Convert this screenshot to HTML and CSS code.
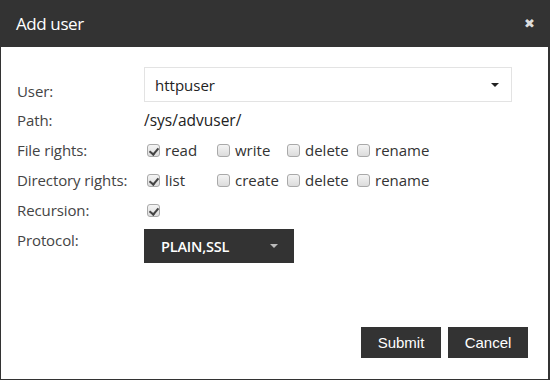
FILE: index.html
```html
<!DOCTYPE html>
<html>
<head>
<meta charset="utf-8">
<link rel="stylesheet" href="styles.css">
</head>
<body>
<div class="modal">
  <div class="header">
    <span class="title">Add user</span>
    <span class="close">&#x2716;</span>
  </div>
  <div class="body">
    <div class="form">
      <div class="row row-user">
        <div class="label">User:</div>
        <div class="select">
          <span>httpuser</span>
          <span class="caret"></span>
        </div>
      </div>
      <div class="row">
        <div class="label">Path:</div>
        <div class="path">/sys/advuser/</div>
      </div>
      <div class="row">
        <div class="label">File rights:</div>
        <div class="checks">
          <label class="opt"><span class="cb on"></span>read</label>
          <label class="opt"><span class="cb"></span>write</label>
          <label class="opt"><span class="cb"></span>delete</label>
          <label class="opt"><span class="cb"></span>rename</label>
        </div>
      </div>
      <div class="row">
        <div class="label">Directory rights:</div>
        <div class="checks">
          <label class="opt"><span class="cb on"></span>list</label>
          <label class="opt"><span class="cb"></span>create</label>
          <label class="opt"><span class="cb"></span>delete</label>
          <label class="opt"><span class="cb"></span>rename</label>
        </div>
      </div>
      <div class="row">
        <div class="label">Recursion:</div>
        <div class="checks">
          <label class="opt"><span class="cb on"></span></label>
        </div>
      </div>
      <div class="row row-proto">
        <div class="label">Protocol:</div>
        <div class="proto">
          <span>PLAIN,SSL</span>
          <span class="caret light"></span>
        </div>
      </div>
    </div>
    <div class="footer">
      <button class="btn">Submit</button>
      <button class="btn">Cancel</button>
    </div>
  </div>
</div>
</body>
</html>
```
FILE: styles.css
```css
* { box-sizing: border-box; }
html, body { margin: 0; padding: 0; background: #fff; }
body { font-family: "Open Sans", sans-serif; color: #333; }

.modal {
  width: 550px;
  height: 380px;
  display: flex;
  flex-direction: column;
  border: 1px solid #333;
  border-right-width: 2px;
  border-top: none;
}

.header {
  height: 47px;
  flex-shrink: 0;
  background: #333;
  color: #fff;
  display: flex;
  align-items: center;
  justify-content: space-between;
  padding: 0 15px 0 16px;
  margin: 0 -2px 0 -1px;
}
.title { font-size: 17px; font-weight: 400; letter-spacing: -0.4px; }
.close { font-size: 13px; color: #ddd; font-family: "DejaVu Sans", sans-serif; }

.body {
  flex: 1;
  display: flex;
  flex-direction: column;
  padding: 20px 20px 21px 16px;
}

.form { display: flex; flex-direction: column; }

.row {
  display: flex;
  align-items: center;
  height: 30px;
  font-size: 14px;
}
.label {
  width: 127px;
  flex-shrink: 0;
  line-height: 30px;
  font-size: 15px;
  letter-spacing: -0.1px;
  color: #444;
}

.row-user { height: 38px; align-items: flex-end; }
.row-user .select { margin-bottom: 3px; }
.row-user .label { line-height: 28px; }
.select {
  width: 368px;
  height: 35px;
  border: 1px solid #e3e3e3;
  display: flex;
  align-items: center;
  justify-content: space-between;
  padding: 0 12px 0 10px;
  font-size: 15px;
  color: #222;
}
.caret {
  width: 0; height: 0;
  border-left: 4px solid transparent;
  border-right: 4px solid transparent;
  border-top: 4px solid #222;
}
.caret.light { border-top-color: #bbb; }

.path { font-size: 15.5px; color: #222; }

.checks { display: flex; align-items: center; }
.opt {
  width: 70px;
  flex-shrink: 0;
  display: flex;
  align-items: center;
  font-size: 15px;
  color: #333;
  padding-left: 3px;
}
.cb {
  width: 13px; height: 13px;
  flex-shrink: 0;
  border: 1px solid #a9a9a9;
  border-radius: 3px;
  background: linear-gradient(#f4f4f4, #dcdcdc);
  margin-right: 5px;
  position: relative;
}
.cb.on::after {
  content: "";
  position: absolute;
  left: 3px; top: 1px;
  width: 4px; height: 7px;
  border-right: 2px solid #444;
  border-bottom: 2px solid #444;
  transform: rotate(40deg);
}

.row-proto { align-items: flex-start; height: 40px; }
.proto {
  margin-top: 4px;
  width: 150px;
  height: 34px;
  background: #333;
  color: #fff;
  display: flex;
  align-items: center;
  justify-content: space-between;
  padding: 0 16px 0 17px;
  font-size: 14.5px;
  font-weight: 600;
  letter-spacing: -0.2px;
}

.footer {
  margin-top: auto;
  display: flex;
  justify-content: flex-end;
  gap: 7px;
}
.btn {
  width: 80px;
  height: 31px;
  background: #333;
  color: #fff;
  border: none;
  font-family: "Liberation Sans", Arial, sans-serif;
  font-size: 15px;
  padding: 0;
}
```
